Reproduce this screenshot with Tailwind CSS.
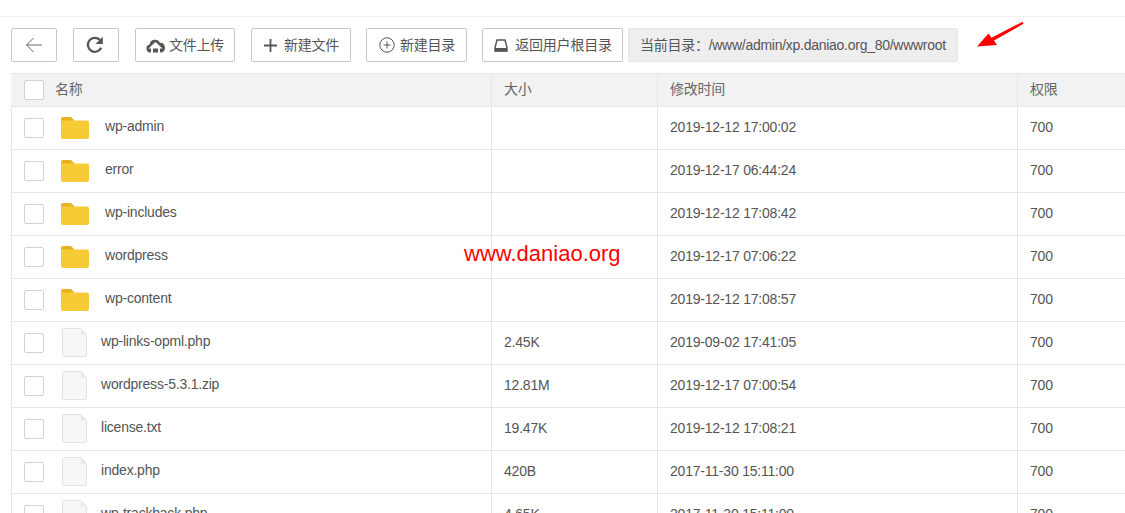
<!DOCTYPE html>
<html lang="zh">
<head>
<meta charset="utf-8">
<script src="https://cdn.jsdelivr.net/npm/@tailwindcss/browser@4"></script>
</head>
<body class="relative w-[1125px] h-[513px] overflow-hidden bg-white font-['Liberation_Sans','Noto_Sans_CJK_SC',sans-serif] text-[14px] text-[#555] tracking-[-0.21px]">
<div class="h-[17px] border-b border-[#f2f2f2]"></div>

<div class="flex items-start pl-[11px] pt-[11px] h-[56px]">
  <button class="flex items-center justify-center w-[46px] h-[34px] border border-[#c9c9c9] rounded-[2px]" aria-label="back">
    <svg class="-ml-[1px]" width="18" height="16" viewBox="0 0 18 16" fill="none" stroke="#666" stroke-width="1"><path d="M17 8H1.500M8.500 1 1.500 8l7 7"/></svg>
  </button>
  <button class="flex items-center justify-center w-[46px] h-[34px] ml-[16px] border border-[#c9c9c9] rounded-[2px]" aria-label="refresh">
    <svg class="-ml-[2px]" width="18" height="18" viewBox="0 0 18 18" fill="none"><path d="M15.200 11.800A7 7 0 1 1 13.900 3.900" stroke="#555" stroke-width="2.300"/><path d="M16.800 .8v7.200H9.600z" fill="#555"/></svg>
  </button>
  <button class="flex items-center justify-center w-[100px] h-[34px] ml-[16px] border border-[#c9c9c9] rounded-[2px]">
    <svg class="mr-[4px]" width="19" height="15" viewBox="0 0 19 15"><path d="M5 14.500H4.200A4 4 0 0 1 3.600 6.600 5.500 5.500 0 0 1 14 4.800 4.900 4.900 0 0 1 15 14.500H14V10.500H16.500L9.500 4 2.500 10.500H5Z M7 10.500H12V14.500H7Z" fill="#555"/></svg>文件上传
  </button>
  <button class="flex items-center justify-center w-[100px] h-[34px] ml-[16px] border border-[#c9c9c9] rounded-[2px]">
    <svg class="mr-[7px] ml-[1px]" width="13" height="13" viewBox="0 0 13 13"><path d="M5.600 0h1.800v5.600H13v1.800H7.400V13H5.600V7.400H0V5.600h5.600z" fill="#555"/></svg>新建文件
  </button>
  <button class="flex items-center justify-center w-[101px] h-[34px] ml-[15px] border border-[#c9c9c9] rounded-[2px]">
    <svg class="mr-[5px] ml-[1px]" width="16" height="16" viewBox="0 0 16 16" fill="none" stroke="#555" stroke-width="1"><circle cx="8" cy="8" r="7.200"/><path d="M8 4.500v7M4.500 8h7"/></svg>新建目录
  </button>
  <button class="flex items-center justify-center w-[141px] h-[34px] ml-[15px] border border-[#c9c9c9] rounded-[2px]">
    <svg class="mr-[7px] ml-[1px]" width="14" height="13" viewBox="0 0 14 13" fill="none"><path d="M3 1h8l2 7.500v3.500H1V8.500z" stroke="#555" stroke-width="1.500"/><path d="M1 9h12v3.500H1z" fill="#555"/></svg>返回用户根目录
  </button>
  <div class="flex items-center w-[330px] h-[34px] ml-[5px] pl-[11px] border border-[#e6e6e6] rounded-[2px] bg-[#eee] whitespace-nowrap tracking-[-0.27px]">当前目录：/www/admin/xp.daniao.org_80/wwwroot</div>
</div>

<div class="ml-[11px] w-[1114px] border-l border-[#e6e6e6]">
  <div class="flex h-[34px] bg-[#f2f2f2] border-y border-[#e6e6e6] -ml-px pl-px">
    <div class="flex items-center w-[479px] pl-[12px]">
      <span class="w-[20px] h-[20px] border border-[#d2d2d2] rounded-[2px] bg-white"></span>
      <span class="ml-[11px] text-[#666] -translate-y-px">名称</span>
    </div>
    <div class="flex items-center w-[166px] pl-[12px] pb-[2px] border-l border-[#e6e6e6] text-[#666]">大小</div>
    <div class="flex items-center w-[360px] pl-[12px] pb-[2px] border-l border-[#e6e6e6] text-[#666]">修改时间</div>
    <div class="flex items-center flex-1 pl-[12px] pb-[2px] border-l border-[#e6e6e6] text-[#666]">权限</div>
  </div>

  <div class="flex h-[43px] border-b border-[#e6e6e6]">
    <div class="flex items-center w-[479px] pl-[12px]">
      <span class="w-[20px] h-[20px] border border-[#d2d2d2] rounded-[2px]"></span>
      <svg class="ml-[17px] -translate-y-px" width="28" height="23" viewBox="0 0 28 23"><path d="M0 3a2 2 0 0 1 2-2h8l3 3v4H0z" fill="#e6b31e"/><path d="M0 5.500a1 1 0 0 1 1-1h25a2 2 0 0 1 2 2V21a2 2 0 0 1-2 2H2a2 2 0 0 1-2-2z" fill="#f7cb36"/></svg>
      <span class="ml-[16px] -translate-y-[2px]">wp-admin</span>
    </div>
    <div class="w-[166px] pl-[12px] pb-[2px] border-l border-[#e6e6e6] flex items-center"></div>
    <div class="w-[360px] pl-[12px] pb-[2px] border-l border-[#e6e6e6] flex items-center">2019-12-12 17:00:02</div>
    <div class="flex-1 pl-[12px] pb-[2px] border-l border-[#e6e6e6] flex items-center">700</div>
  </div>
  <div class="flex h-[43px] border-b border-[#e6e6e6]">
    <div class="flex items-center w-[479px] pl-[12px]">
      <span class="w-[20px] h-[20px] border border-[#d2d2d2] rounded-[2px]"></span>
      <svg class="ml-[17px] -translate-y-px" width="28" height="23" viewBox="0 0 28 23"><path d="M0 3a2 2 0 0 1 2-2h8l3 3v4H0z" fill="#e6b31e"/><path d="M0 5.500a1 1 0 0 1 1-1h25a2 2 0 0 1 2 2V21a2 2 0 0 1-2 2H2a2 2 0 0 1-2-2z" fill="#f7cb36"/></svg>
      <span class="ml-[16px] -translate-y-[2px]">error</span>
    </div>
    <div class="w-[166px] pl-[12px] pb-[2px] border-l border-[#e6e6e6] flex items-center"></div>
    <div class="w-[360px] pl-[12px] pb-[2px] border-l border-[#e6e6e6] flex items-center">2019-12-17 06:44:24</div>
    <div class="flex-1 pl-[12px] pb-[2px] border-l border-[#e6e6e6] flex items-center">700</div>
  </div>
  <div class="flex h-[43px] border-b border-[#e6e6e6]">
    <div class="flex items-center w-[479px] pl-[12px]">
      <span class="w-[20px] h-[20px] border border-[#d2d2d2] rounded-[2px]"></span>
      <svg class="ml-[17px] -translate-y-px" width="28" height="23" viewBox="0 0 28 23"><path d="M0 3a2 2 0 0 1 2-2h8l3 3v4H0z" fill="#e6b31e"/><path d="M0 5.500a1 1 0 0 1 1-1h25a2 2 0 0 1 2 2V21a2 2 0 0 1-2 2H2a2 2 0 0 1-2-2z" fill="#f7cb36"/></svg>
      <span class="ml-[16px] -translate-y-[2px]">wp-includes</span>
    </div>
    <div class="w-[166px] pl-[12px] pb-[2px] border-l border-[#e6e6e6] flex items-center"></div>
    <div class="w-[360px] pl-[12px] pb-[2px] border-l border-[#e6e6e6] flex items-center">2019-12-12 17:08:42</div>
    <div class="flex-1 pl-[12px] pb-[2px] border-l border-[#e6e6e6] flex items-center">700</div>
  </div>
  <div class="flex h-[43px] border-b border-[#e6e6e6]">
    <div class="flex items-center w-[479px] pl-[12px]">
      <span class="w-[20px] h-[20px] border border-[#d2d2d2] rounded-[2px]"></span>
      <svg class="ml-[17px] -translate-y-px" width="28" height="23" viewBox="0 0 28 23"><path d="M0 3a2 2 0 0 1 2-2h8l3 3v4H0z" fill="#e6b31e"/><path d="M0 5.500a1 1 0 0 1 1-1h25a2 2 0 0 1 2 2V21a2 2 0 0 1-2 2H2a2 2 0 0 1-2-2z" fill="#f7cb36"/></svg>
      <span class="ml-[16px] -translate-y-[2px]">wordpress</span>
    </div>
    <div class="w-[166px] pl-[12px] pb-[2px] border-l border-[#e6e6e6] flex items-center"></div>
    <div class="w-[360px] pl-[12px] pb-[2px] border-l border-[#e6e6e6] flex items-center">2019-12-17 07:06:22</div>
    <div class="flex-1 pl-[12px] pb-[2px] border-l border-[#e6e6e6] flex items-center">700</div>
  </div>
  <div class="flex h-[43px] border-b border-[#e6e6e6]">
    <div class="flex items-center w-[479px] pl-[12px]">
      <span class="w-[20px] h-[20px] border border-[#d2d2d2] rounded-[2px]"></span>
      <svg class="ml-[17px] -translate-y-px" width="28" height="23" viewBox="0 0 28 23"><path d="M0 3a2 2 0 0 1 2-2h8l3 3v4H0z" fill="#e6b31e"/><path d="M0 5.500a1 1 0 0 1 1-1h25a2 2 0 0 1 2 2V21a2 2 0 0 1-2 2H2a2 2 0 0 1-2-2z" fill="#f7cb36"/></svg>
      <span class="ml-[16px] -translate-y-[2px]">wp-content</span>
    </div>
    <div class="w-[166px] pl-[12px] pb-[2px] border-l border-[#e6e6e6] flex items-center"></div>
    <div class="w-[360px] pl-[12px] pb-[2px] border-l border-[#e6e6e6] flex items-center">2019-12-12 17:08:57</div>
    <div class="flex-1 pl-[12px] pb-[2px] border-l border-[#e6e6e6] flex items-center">700</div>
  </div>

  <div class="flex h-[43px] border-b border-[#e6e6e6]">
    <div class="flex items-center w-[479px] pl-[12px]">
      <span class="w-[20px] h-[20px] border border-[#d2d2d2] rounded-[2px]"></span>
      <svg class="ml-[18px] -translate-y-px" width="25" height="29" viewBox="0 0 25 29"><path d="M2 .5h17l5.500 6V27a1.500 1.500 0 0 1-1.500 1.500H2A1.500 1.500 0 0 1 .5 27V2A1.500 1.500 0 0 1 2 .5z" fill="#f7f7f7" stroke="#e2e2e2"/><path d="M19 .5v6h5.500z" fill="#e8e8e8"/></svg>
      <span class="ml-[14px] -translate-y-[2px]">wp-links-opml.php</span>
    </div>
    <div class="w-[166px] pl-[12px] pb-[2px] border-l border-[#e6e6e6] flex items-center">2.45K</div>
    <div class="w-[360px] pl-[12px] pb-[2px] border-l border-[#e6e6e6] flex items-center">2019-09-02 17:41:05</div>
    <div class="flex-1 pl-[12px] pb-[2px] border-l border-[#e6e6e6] flex items-center">700</div>
  </div>
  <div class="flex h-[43px] border-b border-[#e6e6e6]">
    <div class="flex items-center w-[479px] pl-[12px]">
      <span class="w-[20px] h-[20px] border border-[#d2d2d2] rounded-[2px]"></span>
      <svg class="ml-[18px] -translate-y-px" width="25" height="29" viewBox="0 0 25 29"><path d="M2 .5h17l5.500 6V27a1.500 1.500 0 0 1-1.500 1.500H2A1.500 1.500 0 0 1 .5 27V2A1.500 1.500 0 0 1 2 .5z" fill="#f7f7f7" stroke="#e2e2e2"/><path d="M19 .5v6h5.500z" fill="#e8e8e8"/></svg>
      <span class="ml-[14px] -translate-y-[2px]">wordpress-5.3.1.zip</span>
    </div>
    <div class="w-[166px] pl-[12px] pb-[2px] border-l border-[#e6e6e6] flex items-center">12.81M</div>
    <div class="w-[360px] pl-[12px] pb-[2px] border-l border-[#e6e6e6] flex items-center">2019-12-17 07:00:54</div>
    <div class="flex-1 pl-[12px] pb-[2px] border-l border-[#e6e6e6] flex items-center">700</div>
  </div>
  <div class="flex h-[43px] border-b border-[#e6e6e6]">
    <div class="flex items-center w-[479px] pl-[12px]">
      <span class="w-[20px] h-[20px] border border-[#d2d2d2] rounded-[2px]"></span>
      <svg class="ml-[18px] -translate-y-px" width="25" height="29" viewBox="0 0 25 29"><path d="M2 .5h17l5.500 6V27a1.500 1.500 0 0 1-1.500 1.500H2A1.500 1.500 0 0 1 .5 27V2A1.500 1.500 0 0 1 2 .5z" fill="#f7f7f7" stroke="#e2e2e2"/><path d="M19 .5v6h5.500z" fill="#e8e8e8"/></svg>
      <span class="ml-[14px] -translate-y-[2px]">license.txt</span>
    </div>
    <div class="w-[166px] pl-[12px] pb-[2px] border-l border-[#e6e6e6] flex items-center">19.47K</div>
    <div class="w-[360px] pl-[12px] pb-[2px] border-l border-[#e6e6e6] flex items-center">2019-12-12 17:08:21</div>
    <div class="flex-1 pl-[12px] pb-[2px] border-l border-[#e6e6e6] flex items-center">700</div>
  </div>
  <div class="flex h-[43px] border-b border-[#e6e6e6]">
    <div class="flex items-center w-[479px] pl-[12px]">
      <span class="w-[20px] h-[20px] border border-[#d2d2d2] rounded-[2px]"></span>
      <svg class="ml-[18px] -translate-y-px" width="25" height="29" viewBox="0 0 25 29"><path d="M2 .5h17l5.500 6V27a1.500 1.500 0 0 1-1.500 1.500H2A1.500 1.500 0 0 1 .5 27V2A1.500 1.500 0 0 1 2 .5z" fill="#f7f7f7" stroke="#e2e2e2"/><path d="M19 .5v6h5.500z" fill="#e8e8e8"/></svg>
      <span class="ml-[14px] -translate-y-[2px]">index.php</span>
    </div>
    <div class="w-[166px] pl-[12px] pb-[2px] border-l border-[#e6e6e6] flex items-center">420B</div>
    <div class="w-[360px] pl-[12px] pb-[2px] border-l border-[#e6e6e6] flex items-center">2017-11-30 15:11:00</div>
    <div class="flex-1 pl-[12px] pb-[2px] border-l border-[#e6e6e6] flex items-center">700</div>
  </div>
  <div class="flex h-[43px] border-b border-[#e6e6e6]">
    <div class="flex items-center w-[479px] pl-[12px]">
      <span class="w-[20px] h-[20px] border border-[#d2d2d2] rounded-[2px]"></span>
      <svg class="ml-[18px] -translate-y-px" width="25" height="29" viewBox="0 0 25 29"><path d="M2 .5h17l5.500 6V27a1.500 1.500 0 0 1-1.500 1.500H2A1.500 1.500 0 0 1 .5 27V2A1.500 1.500 0 0 1 2 .5z" fill="#f7f7f7" stroke="#e2e2e2"/><path d="M19 .5v6h5.500z" fill="#e8e8e8"/></svg>
      <span class="ml-[14px] -translate-y-[2px]">wp-trackback.php</span>
    </div>
    <div class="w-[166px] pl-[12px] pb-[2px] border-l border-[#e6e6e6] flex items-center">4.65K</div>
    <div class="w-[360px] pl-[12px] pb-[2px] border-l border-[#e6e6e6] flex items-center">2017-11-30 15:11:00</div>
    <div class="flex-1 pl-[12px] pb-[2px] border-l border-[#e6e6e6] flex items-center">700</div>
  </div>
</div>

<div class="absolute left-[464px] top-[241px] text-[22px] leading-[26px] tracking-normal text-[#ff0000]">www.daniao.org</div>
<svg class="absolute left-[975px] top-[20px]" width="50" height="28" viewBox="0 0 50 28"><path d="M2 26.500 13.500 13.500l3 4.300L47.500 1.800l1 2L19 20.500l3 4.500z" fill="#f00"/></svg>
</body>
</html>
